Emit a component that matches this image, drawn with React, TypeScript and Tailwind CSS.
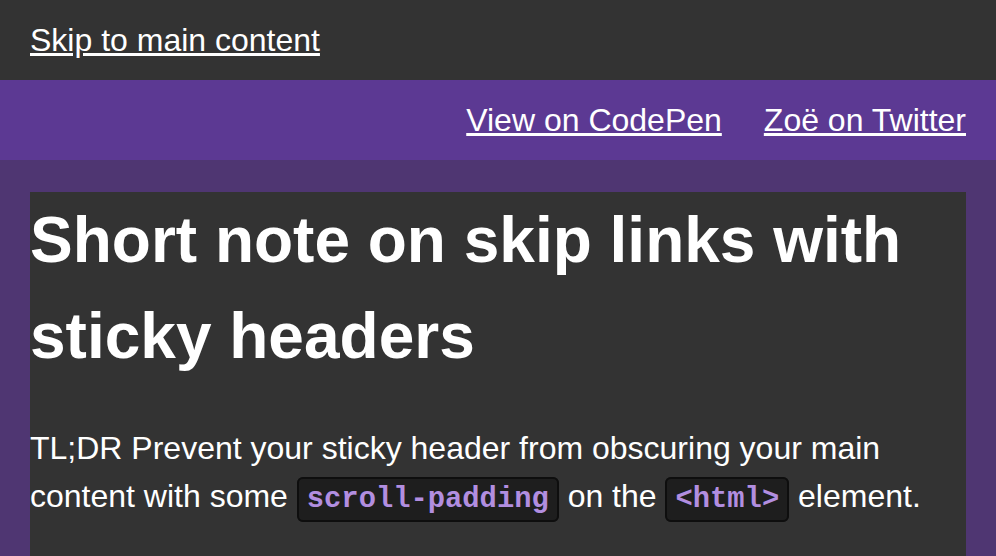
import React from "react";

function Code({ children }: { children: React.ReactNode }) {
  return (
    <code className="font-[family-name:'Liberation_Mono','Courier_New',monospace] font-bold text-[28.8px] text-[#b28ee0] bg-[#1e1e1e] border-2 border-[#0e0e0e] rounded-[6px] px-[8px] py-[4px]">
      {children}
    </code>
  );
}

export default function App() {
  return (
    <div className="min-h-[556px] bg-[#4f3672] text-white text-[32px] leading-[1.5] font-[family-name:'Liberation_Sans',Arial,sans-serif]">
      <div className="bg-[#333333] px-[30px] py-[16px]">
        <a href="#main" className="underline text-white">Skip to main content</a>
      </div>
      <nav className="bg-[#5c3993] px-[30px] py-[16px] flex justify-end gap-[42px]">
        <a href="#" className="underline text-white">View on CodePen</a>
        <a href="#" className="underline text-white">Zoë on Twitter</a>
      </nav>
      <div className="px-[30px] pt-[32px]">
        <main id="main" className="bg-[#333333] min-h-[400px]">
          <h1 className="text-[64px] leading-[96px] font-bold m-0 mb-[40px]">
            Short note on skip links with sticky headers
          </h1>
          <p className="m-0">
            TL;DR Prevent your sticky header from obscuring your main content with some{" "}
            <Code>scroll-padding</Code> on the <Code>&lt;html&gt;</Code> element.
          </p>
        </main>
      </div>
    </div>
  );
}
